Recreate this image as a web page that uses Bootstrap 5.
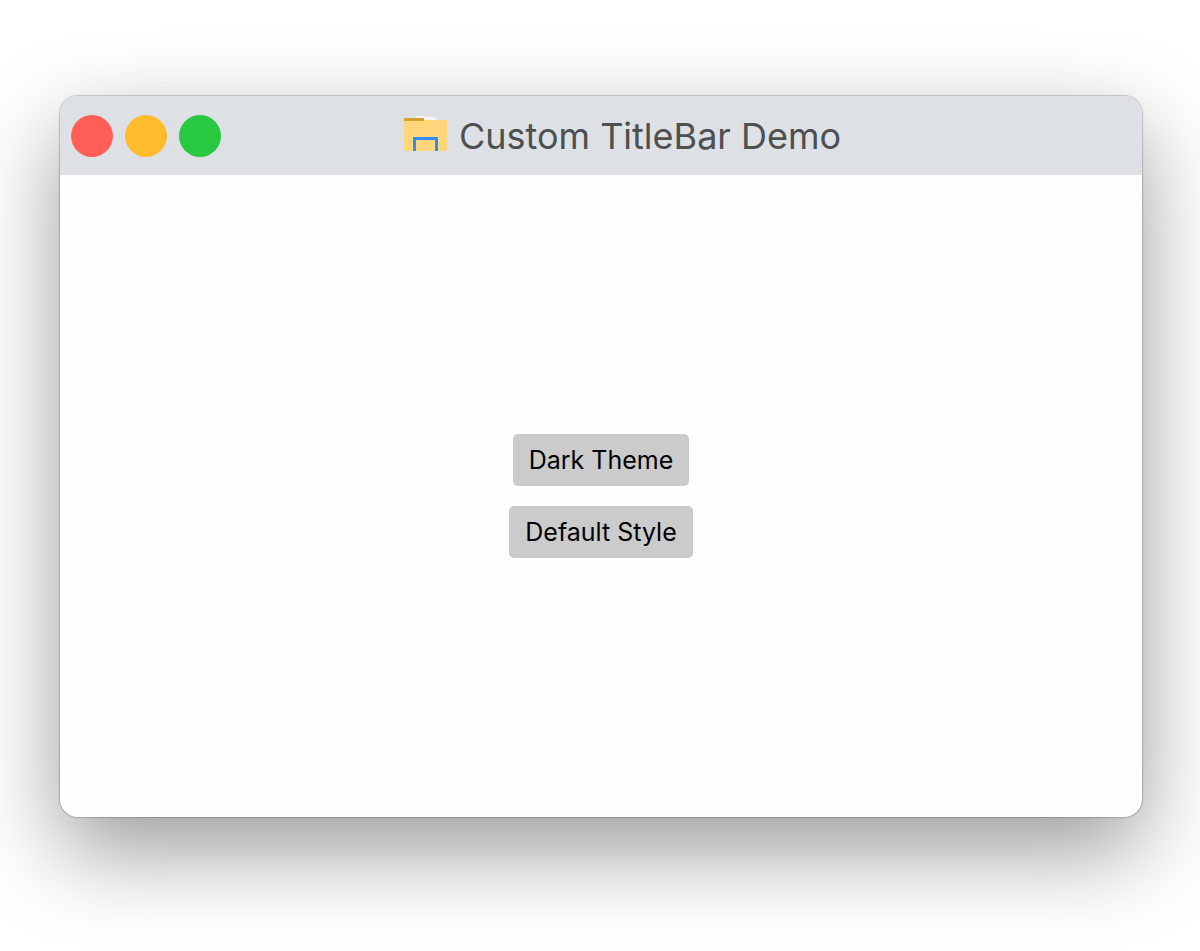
<!DOCTYPE html>
<html lang="en">
<head>
<meta charset="utf-8">
<meta name="viewport" content="width=device-width, initial-scale=1">
<title>Custom TitleBar Demo</title>
<link href="https://cdn.jsdelivr.net/npm/bootstrap@5.3.0/dist/css/bootstrap.min.css" rel="stylesheet">
<style>
body { font-family: Inter, "Liberation Sans", sans-serif; background: #fff; }
.desktop { padding: 96px 58px 134px 60px; }
.app-window {
  border-radius: 18px;
  background: #fefefe;
  box-shadow: 0 0 0 1px rgba(0,0,0,.12), 0 0 3px rgba(0,0,0,.16), 0 34px 90px rgba(0,0,0,.4);
}
.title-bar { height: 79px; padding: 0 118px 0 11px; background: #dde1e6; }
.window-dots { gap: 12px; }
.dot { width: 42px; height: 42px; padding: 0; border: 0; border-radius: 50%; }
.dot-close { background: #ff5f57; }
.dot-minimize { background: #ffbd2e; }
.dot-zoom { background: #28c940; }
.window-title { gap: 12px; font-size: 36px; line-height: 44px; font-weight: 400; color: #4f4f4f; }
.window-body { gap: 20px; }
.btn-plain {
  --bs-btn-bg: #cbcbcb; --bs-btn-color: #000;
  --bs-btn-hover-bg: #bdbdbd; --bs-btn-hover-color: #000;
  --bs-btn-border-width: 0;
  --bs-btn-border-radius: 5px;
  --bs-btn-padding-x: 16px; --bs-btn-padding-y: 10px;
  --bs-btn-font-size: 25px; --bs-btn-line-height: 32px;
}
</style>
</head>
<body>
<div class="desktop vh-100">
  <main class="app-window d-flex flex-column h-100 overflow-hidden">
    <header class="title-bar d-flex align-items-center flex-shrink-0">
      <div class="window-dots d-flex">
        <button type="button" class="dot dot-close" aria-label="Close"></button>
        <button type="button" class="dot dot-minimize" aria-label="Minimize"></button>
        <button type="button" class="dot dot-zoom" aria-label="Zoom"></button>
      </div>
      <h1 class="window-title d-flex align-items-center justify-content-center flex-grow-1 mb-0 text-nowrap">
        <svg width="43" height="42" viewBox="0 0 43 42" aria-hidden="true">
          <path fill="#f6f5f2" d="M10 5 12 1l19 1 3 4v4H10z"/>
          <path fill="#ffd679" d="M0 5h42q1 0 1 1v29q0 1-1 1H1q-1 0-1-1z"/>
          <path fill="#d4a02e" d="M1 3h19v3H0V4q0-1 1-1z"/>
          <path fill="#2e8cf4" d="M9 22h25v14h-3V25H12v11H9z"/>
        </svg>
        <span>Custom TitleBar Demo</span>
      </h1>
    </header>
    <div class="window-body d-flex flex-column align-items-center justify-content-center flex-grow-1">
      <button type="button" class="btn btn-plain">Dark Theme</button>
      <button type="button" class="btn btn-plain">Default Style</button>
    </div>
  </main>
</div>
<script src="https://cdn.jsdelivr.net/npm/bootstrap@5.3.0/dist/js/bootstrap.bundle.min.js"></script>
</body>
</html>
